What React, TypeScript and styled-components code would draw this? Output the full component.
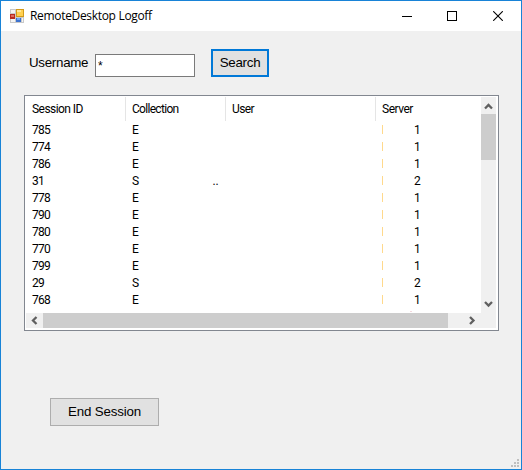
import React from 'react';
import styled, { createGlobalStyle } from 'styled-components';

const GlobalStyle = createGlobalStyle`
  *, *::before, *::after { box-sizing: border-box; }
  body { margin: 0; background: #f0f0f0; }
`;

const Window = styled.main`
  width: 522px;
  height: 470px;
  border: 1px solid #1883d7;
  background: #f0f0f0;
  color: #000;
  display: flex;
  flex-direction: column;
  overflow: hidden;
`;

const TitleBar = styled.header`
  height: 30px;
  flex: none;
  background: #fff;
  display: flex;
  align-items: center;
  padding-left: 9px;
`;

const Title = styled.h1`
  margin: 0 auto 0 6px;
  font: 400 12px/16px 'Open Sans', sans-serif;
  letter-spacing: -0.32px;
  white-space: nowrap;
`;

const CaptionButtons = styled.div`
  display: flex;
  align-self: stretch;
`;

const CaptionButton = styled.button<{ $width: number }>`
  width: ${(p) => p.$width}px;
  border: 0;
  padding: 0;
  background: none;
  display: flex;
  align-items: center;
  justify-content: center;
`;

const Client = styled.section`
  flex: 1;
  display: flex;
  flex-direction: column;
  align-items: flex-start;
  padding: 18px 0 0 23px;
`;

const SearchRow = styled.form`
  display: flex;
  height: 28px;
  margin-left: 5px;
`;

const Label = styled.label`
  width: 66px;
  font: 13.33px/27px 'Liberation Sans', sans-serif;
  letter-spacing: -0.28px;
`;

const TextBox = styled.input`
  width: 100px;
  height: 23px;
  margin: 5px 16px 0 0;
  border: 1px solid #7a7a7a;
  border-radius: 0;
  padding: 0 2px;
  background: #fff;
  color: #000;
  outline: none;
  font: 12px/19px 'Liberation Sans', sans-serif;
`;

const Button = styled.button<{ $focused?: boolean; $width: number; $spacing: number }>`
  width: ${(p) => p.$width}px;
  height: 28px;
  padding: 0 0 1px;
  border: ${(p) => (p.$focused ? '2px solid #0078d7' : '1px solid #adadad')};
  border-radius: 0;
  background: #e1e1e1;
  color: #000;
  font: 13.33px/16px 'Liberation Sans', sans-serif;
  letter-spacing: ${(p) => p.$spacing}px;
  white-space: nowrap;
`;

const ListView = styled.div`
  width: 475px;
  height: 236px;
  margin: 18px 0 67px;
  padding: 1px;
  border: 1px solid #828790;
  background: #fff;
  display: grid;
  grid-template: 216px 15px / 455px 15px;
`;

const Rows = styled.div`
  overflow: hidden;
  background: #fff;
  font: 12px/17px Roboto, sans-serif;
`;

const Row = styled.div`
  display: grid;
  grid-template-columns: 100px 100px 150px 105px;
  height: 17px;
`;

const HeaderRow = styled(Row)`
  height: 24px;
  line-height: 24px;
`;

const HeaderCell = styled.div<{ $spacing: number; $last?: boolean }>`
  padding-left: 6px;
  border-right: ${(p) => (p.$last ? '0' : '1px solid #e5e5e5')};
  letter-spacing: ${(p) => p.$spacing}px;
  white-space: nowrap;
`;

const Cell = styled.div`
  padding: 1px 0 0 6px;
  letter-spacing: -0.75px;
  display: flex;
  white-space: nowrap;
`;

const Dots = styled.span`
  margin-left: 74px;
  letter-spacing: 0;
`;

const ServerMark = styled.span`
  width: 1px;
  height: 9px;
  margin: 3px 31px 0 0;
  background: #ffd98c;
`;

const NextRowTrace = styled.div`
  width: 2px;
  height: 1px;
  margin: 3px 0 0 384px;
  background: #f3d9de;
`;

const ScrollBar = styled.div<{ $horizontal?: boolean }>`
  background: #f0f0f0;
  display: flex;
  flex-direction: ${(p) => (p.$horizontal ? 'row' : 'column')};
`;

const Thumb = styled.div<{ $width: number; $height: number }>`
  width: ${(p) => p.$width}px;
  height: ${(p) => p.$height}px;
  background: #cdcdcd;
`;

const HorizontalArrow = styled.svg<{ $end?: boolean }>`
  width: 17px;
  height: 15px;
  flex: none;
  ${(p) => p.$end && 'margin-left: auto;'}
`;

const VerticalArrow = styled.svg<{ $end?: boolean }>`
  width: 15px;
  height: 17px;
  flex: none;
  ${(p) => p.$end && 'margin-top: auto;'}
`;

const Corner = styled.div`
  background: #f0f0f0;
`;

const EndSession = styled.div`
  margin-left: 26px;
`;

const SizeGrip = styled.svg`
  display: block;
  margin: auto 2px 2px auto;
`;

const sessions = [
  ['785', 'E', '1'],
  ['774', 'E', '1'],
  ['786', 'E', '1'],
  ['31', 'S', '2'],
  ['778', 'E', '1'],
  ['790', 'E', '1'],
  ['780', 'E', '1'],
  ['770', 'E', '1'],
  ['799', 'E', '1'],
  ['29', 'S', '2'],
  ['768', 'E', '1'],
];

const AppIcon = () => (
  <svg width="14" height="14" viewBox="0 0 14 14" shapeRendering="crispEdges">
    <path fill="#c9c9c9" d="M0 0h14v14H0z" />
    <path fill="#f4f4f4" d="M1 1h4v3H1zM1 10h4v3H1z" />
    <path fill="#b82b20" d="M0 5h5v5H0z" />
    <path fill="#e06b5e" d="M1 6h3v2H1z" />
    <path fill="#d39a18" d="M6 0h8v8H6z" />
    <path fill="#ffd050" d="M7 1h6v6H7z" />
    <path fill="#ffe79a" d="M7 1h4v2H7z" />
    <path fill="#3c72cf" d="M6 9h5v4H6z" />
    <path fill="#73a7f3" d="M7 9h3v2H7z" />
    <path fill="#f4f4f4" d="M12 9h1v4h-1z" />
  </svg>
);

export default function App() {
  return (
    <>
      <GlobalStyle />
      <Window>
        <TitleBar>
          <AppIcon />
          <Title>RemoteDesktop Logoff</Title>
          <CaptionButtons>
            <CaptionButton $width={44} aria-label="Minimize">
              <svg width="10" height="10" shapeRendering="crispEdges"><path d="M0 5h10v1H0z" /></svg>
            </CaptionButton>
            <CaptionButton $width={46} aria-label="Maximize">
              <svg width="10" height="10" shapeRendering="crispEdges"><path fill="none" stroke="#000" d="M.5.5h9v9h-9z" /></svg>
            </CaptionButton>
            <CaptionButton $width={46} aria-label="Close">
              <svg width="10" height="10"><path fill="none" stroke="#000" strokeWidth="1.1" d="m.2.2 9.6 9.6m0-9.6L.2 9.8" /></svg>
            </CaptionButton>
          </CaptionButtons>
        </TitleBar>
        <Client>
          <SearchRow onSubmit={(e) => e.preventDefault()}>
            <Label htmlFor="username">Username</Label>
            <TextBox id="username" defaultValue="*" />
            <Button $focused $width={58} $spacing={-0.25}>Search</Button>
          </SearchRow>
          <ListView>
            <Rows>
              <HeaderRow>
                <HeaderCell $spacing={-0.55}>Session ID</HeaderCell>
                <HeaderCell $spacing={-0.7}>Collection</HeaderCell>
                <HeaderCell $spacing={-0.6}>User</HeaderCell>
                <HeaderCell $spacing={-0.5} $last>Server</HeaderCell>
              </HeaderRow>
              {sessions.map(([id, collection, server]) => (
                <Row key={id}>
                  <Cell>{id}</Cell>
                  <Cell>{collection}{id === '31' && <Dots>..</Dots>}</Cell>
                  <Cell />
                  <Cell><ServerMark />{server}</Cell>
                </Row>
              ))}
              <NextRowTrace />
            </Rows>
            <ScrollBar>
              <VerticalArrow viewBox="0 0 15 17"><path fill="none" stroke="#606060" strokeWidth="2.3" d="m4 11.5 3.5-3.5 3.5 3.5" /></VerticalArrow>
              <Thumb $width={15} $height={46} />
              <VerticalArrow $end viewBox="0 0 15 17"><path fill="none" stroke="#606060" strokeWidth="2.3" d="m4 6 3.5 3.5L11 6" /></VerticalArrow>
            </ScrollBar>
            <ScrollBar $horizontal>
              <HorizontalArrow viewBox="0 0 17 15"><path fill="none" stroke="#606060" strokeWidth="2.3" d="M10.5 4 7 7.5l3.5 3.5" /></HorizontalArrow>
              <Thumb $width={405} $height={15} />
              <HorizontalArrow $end viewBox="0 0 17 15"><path fill="none" stroke="#606060" strokeWidth="2.3" d="m6 4 3.5 3.5L6 11" /></HorizontalArrow>
            </ScrollBar>
            <Corner />
          </ListView>
          <EndSession>
            <Button $width={109} $spacing={-0.15}>End Session</Button>
          </EndSession>
          <SizeGrip width="8" height="8" shapeRendering="crispEdges">
            <path fill="#bfbfbf" d="M6 0h2v2H6zM3 3h2v2H3zM6 3h2v2H6zM0 6h2v2H0zM3 6h2v2H3zM6 6h2v2H6z" />
          </SizeGrip>
        </Client>
      </Window>
    </>
  );
}
